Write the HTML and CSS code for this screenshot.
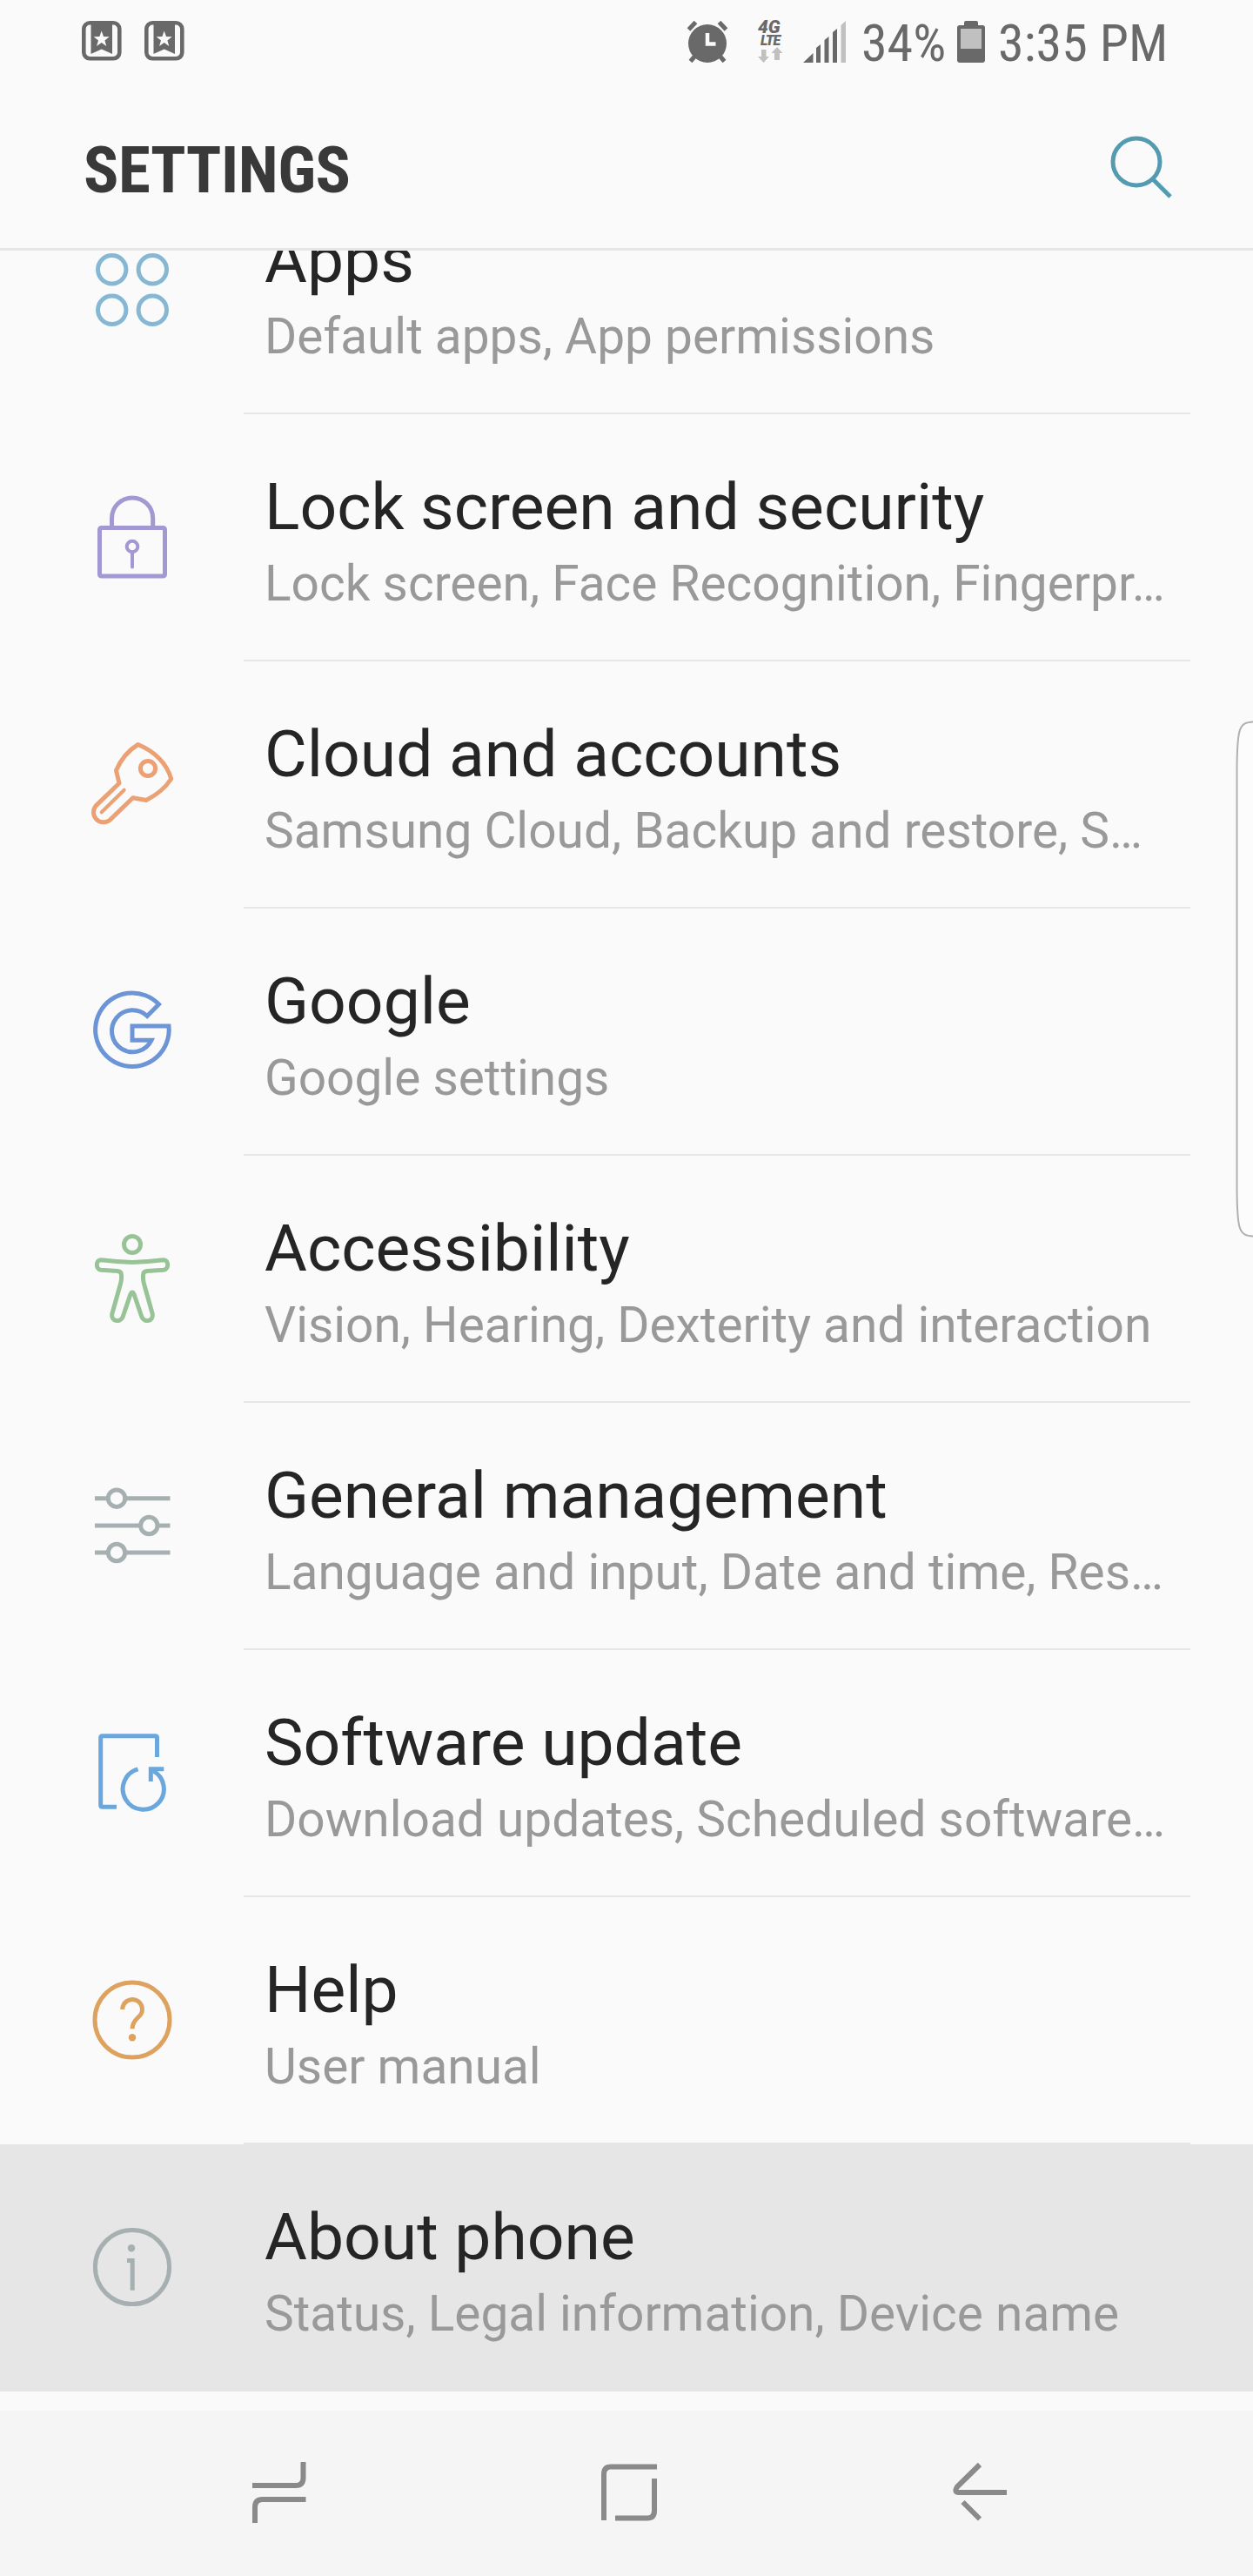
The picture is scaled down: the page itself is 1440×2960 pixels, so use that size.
FILE: index.html
```html
<!DOCTYPE html>
<html lang="en">
<head>
<meta charset="utf-8">
<title>Settings</title>
<link rel="stylesheet" href="styles.css">
</head>
<body>

<div class="phone">
  <!-- Status bar -->
  <div class="status-bar">
    <div class="notifications">
      <svg class="bookmark" width="46" height="46" viewBox="0 0 46 46">
        <rect class="frame" x="2.3" y="2.3" width="41" height="41" rx="7"/>
        <path d="M10.5 2h24.500v36l-12.250-5.500-12.250 5.500z"/>
        <path class="star" d="M22.700 11.500l2.300 6.600 6.700.1-5.300 4.200 1.900 6.500-5.600-3.900-5.600 3.900 1.900-6.500-5.300-4.200 6.700-.1z"/>
      </svg>
      <svg class="bookmark" width="46" height="46" viewBox="0 0 46 46">
        <rect class="frame" x="2.3" y="2.3" width="41" height="41" rx="7"/>
        <path d="M10.5 2h24.500v36l-12.250-5.500-12.250 5.500z"/>
        <path class="star" d="M22.700 11.500l2.300 6.600 6.700.1-5.300 4.200 1.900 6.500-5.600-3.900-5.600 3.900 1.900-6.500-5.300-4.200 6.700-.1z"/>
      </svg>
    </div>
    <div class="indicators">
      <svg class="alarm" width="48" height="48" viewBox="0 0 48 48">
        <circle cx="24" cy="26" r="22"/>
        <path class="bells" d="M2.500 10l8-8.500M45.500 10l-8-8.500M4.500 46.500l6-7M43.500 46.500l-6-7"/>
        <path class="hands" d="M24 14v12.500h9.500"/>
      </svg>
      <div class="network">
        <span class="net-4g">4G</span>
        <span class="net-lte">LTE</span>
        <svg width="30" height="18" viewBox="0 0 30 18">
          <path d="M4 3h5.500v8h3.500l-6.500 7-6.500-7h4zM19 15v-8h-3.500l6.500-7 6.500 7h-3.500v8z"/>
        </svg>
      </div>
      <svg class="signal" width="50" height="48" viewBox="0 0 50 48">
        <path d="M0 48l11.500-11v11zM15 48v-17l5-4v21zM24.500 48v-26l5-4v30zM34 48v-35l5-4v39z"/>
        <path class="off" d="M43.500 48v-43l5.500-5v48z"/>
      </svg>
      <span class="percent">34%</span>
      <svg class="battery" width="32" height="48" viewBox="0 0 32 48">
        <path d="M10 0h12q2 0 2 2v3h5q3 0 3 3v37q0 3-3 3h-26q-3 0-3-3v-37q0-3 3-3h5v-3q0-2 2-2z"/>
        <rect class="off" x="4" y="9" width="24" height="23"/>
      </svg>
      <span class="clock">3:35 PM</span>
    </div>
  </div>

  <!-- Title bar -->
  <div class="header">
    <h1>SETTINGS</h1>
    <svg class="search" width="72" height="72" viewBox="0 0 72 72">
      <circle cx="30" cy="30" r="27"/>
      <path d="M49 50l20 20"/>
    </svg>
  </div>

  <!-- Settings list -->
  <div class="list-window">
    <ul class="list">
      <li class="row">
        <svg class="icon apps" viewBox="0 0 96 96">
          <circle cx="24.700" cy="23.700" r="16.200"/>
          <circle cx="71.300" cy="23.700" r="16.200"/>
          <circle cx="24.700" cy="70.300" r="16.200"/>
          <circle cx="71.300" cy="70.300" r="16.200"/>
        </svg>
        <div class="text">
          <h2>Apps</h2>
          <p>Default apps, App permissions</p>
        </div>
      </li>
      <li class="row">
        <svg class="icon lock" viewBox="0 0 96 96">
          <rect x="10.500" y="36.500" width="75" height="55.500" rx="2"/>
          <path d="M24.500 36.500v-11a23.600 23.600 0 0 1 47.200 0v11"/>
          <circle class="thin" cx="48" cy="58" r="6.300"/>
          <path class="thin" d="M48 64.500v17"/>
        </svg>
        <div class="text">
          <h2>Lock screen and security</h2>
          <p>Lock screen, Face Recognition, Fingerpr…</p>
        </div>
      </li>
      <li class="row">
        <svg class="icon key" viewBox="0 0 96 96">
          <path d="M54.700 1.500Q38 11.500 29.500 31.300L33 46 6.200 71.900A11.500 11.500 0 0 0 22.400 88.100L48.700 62.800 64 65.500Q83 56 92.700 41 85 14.500 54.700 1.500z"/>
          <circle cx="66" cy="29" r="8.600"/>
          <path class="thin" d="M12.700 79.300l26-25.600"/>
        </svg>
        <div class="text">
          <h2>Cloud and accounts</h2>
          <p>Samsung Cloud, Backup and restore, S…</p>
        </div>
      </li>
      <li class="row">
        <svg class="icon google" viewBox="0 0 96 96">
          <path d="M78.500 16A42.300 42.300 0 1 0 90 41H48V57.300H70A24 24 0 1 1 65.200 29.500z"/>
        </svg>
        <div class="text">
          <h2>Google</h2>
          <p>Google settings</p>
        </div>
      </li>
      <li class="row">
        <svg class="icon accessibility" viewBox="0 0 96 96">
          <circle cx="48" cy="8" r="9.500"/>
          <path d="M48 28.500Q30 28 12 25.700C6 25.500 5.500 36.500 12 37.300L31 38.500Q35.500 39 35.500 43V48Q35 52 34 55L24.700 88C23.500 96.500 34 98 37 91.500L46 65Q48 61 50 65L59 91.500C62 98 72.500 96.500 71.300 88L62 55Q61 52 60.500 48V43Q60.500 39 65 38.500L84 37.300C90.500 36.500 90 25.500 84 25.700Q66 28 48 28.500z"/>
        </svg>
        <div class="text">
          <h2>Accessibility</h2>
          <p>Vision, Hearing, Dexterity and interaction</p>
        </div>
      </li>
      <li class="row">
        <svg class="icon general" viewBox="0 0 96 96">
          <circle cx="30" cy="15.700" r="9.700"/>
          <circle cx="67.300" cy="47" r="9.700"/>
          <circle cx="30" cy="78" r="9.700"/>
          <path d="M5 15.700h14M40.500 15.700h51M5 47h52M78 47h13.500M5 78h14M40.500 78h51"/>
        </svg>
        <div class="text">
          <h2>General management</h2>
          <p>Language and input, Date and time, Res…</p>
        </div>
      </li>
      <li class="row">
        <svg class="icon update" viewBox="0 0 96 96">
          <path d="M76.500 29v-22.300q0-2-2-2h-60.800q-2 0-2 2v77.600q0 2 2 2h16.300"/>
          <path d="M54.500 42.900A23.600 23.600 0 1 0 72 44.900"/>
          <path d="M84.300 42.700h-15v14.300"/>
        </svg>
        <div class="text">
          <h2>Software update</h2>
          <p>Download updates, Scheduled software…</p>
        </div>
      </li>
      <li class="row">
        <svg class="icon help" viewBox="0 0 96 96">
          <circle cx="48" cy="47" r="43"/>
          <path d="M36.800 35a11.300 11.300 0 1 1 20 7c-3 3.500-8.800 6.500-8.800 15.300"/>
          <circle class="dot" cx="48" cy="67.300" r="4.200"/>
        </svg>
        <div class="text">
          <h2>Help</h2>
          <p>User manual</p>
        </div>
      </li>
      <li class="row pressed">
        <svg class="icon info" viewBox="0 0 96 96">
          <circle cx="48" cy="47" r="42.600"/>
          <circle class="dot" cx="47" cy="25.300" r="4.200"/>
          <path d="M42 39.500h6.200v34.200"/>
        </svg>
        <div class="text">
          <h2>About phone</h2>
          <p>Status, Legal information, Device name</p>
        </div>
      </li>
    </ul>
  </div>

  <!-- Navigation bar -->
  <div class="nav-bar">
    <svg width="72" height="72" viewBox="0 0 72 72">
      <path d="M5 28h50q8.500 0 8.500-9v-18M8 71v-18q0-9 8.500-9h50"/>
    </svg>
    <svg width="72" height="72" viewBox="0 0 72 72">
      <path d="M7 68v-53q0-8.500 8-8.500h53M65 20v37q0 8.500-8 8.500h-37"/>
    </svg>
    <svg width="72" height="72" viewBox="0 0 72 72">
      <path d="M38 4l-26 25.500q-4 6.500 2 6.500h55M18.500 47l19.500 19.500"/>
    </svg>
  </div>

  <!-- Edge panel handle -->
  <svg class="edge-handle" width="20" height="594" viewBox="0 0 20 594">
    <path d="M21 1.500C4 2 1.500 7 1.500 60V534C1.500 587 4 592 21 592.500"/>
  </svg>
</div>

</body>
</html>
```
FILE: styles.css
```css
/* Reset some default styling */
* {
  margin: 0;
  padding: 0;
  box-sizing: border-box;
}

body {
  font-family: Roboto, sans-serif;
  background-color: #fafafa;
  color: #252525;
}

svg {
  display: block;
  flex-shrink: 0;
  overflow: visible;
}

.phone {
  position: relative;
  display: flex;
  flex-direction: column;
  width: 1440px;
  height: 2960px;
  overflow: hidden;
}

/* Status bar */
.status-bar {
  display: flex;
  justify-content: space-between;
  height: 96px;
  padding: 24px 98px 0 94px;
  color: #696969;
  fill: #696969;
}

.notifications,
.indicators {
  display: flex;
  align-items: flex-start;
}

.notifications {
  gap: 26px;
}

.bookmark .frame {
  fill: none;
  stroke: #696969;
  stroke-width: 4.6;
}

.bookmark .star {
  fill: #fafafa;
}

.alarm {
  margin-right: 34px;
}

.alarm .bells {
  stroke: #696969;
  stroke-width: 5;
}

.alarm .hands {
  fill: none;
  stroke: #fafafa;
  stroke-width: 4.5;
}

.network {
  display: flex;
  flex-direction: column;
  width: 30px;
  margin-right: 22px;
  font-weight: 900;
  font-style: italic;
}

.net-4g {
  font-size: 21px;
  line-height: 15px;
}

.net-lte {
  padding-left: 3px;
  font-size: 16px;
  line-height: 15px;
  letter-spacing: -1px;
}

.network svg,
.off {
  fill: #c0c0c0;
}

.percent,
.clock {
  font-family: "Roboto Condensed", Roboto, sans-serif;
  font-stretch: 75%;
  font-size: 60px;
  line-height: 60px;
  margin-top: -4px;
  white-space: nowrap;
}

.percent {
  width: 95px;
  margin: -4px 15px 0 17px;
}

.clock {
  width: 195px;
  margin-left: 15px;
}

/* Title bar */
.header {
  display: flex;
  justify-content: space-between;
  align-items: flex-start;
  height: 192px;
  padding: 55px 92px 0 96px;
  border-bottom: 3px solid #e6e6e6;
}

.header h1 {
  font-family: "Roboto Condensed", Roboto, sans-serif;
  font-stretch: 75%;
  font-size: 75px;
  line-height: 88px;
  font-weight: 700;
  letter-spacing: -0.5px;
  color: #393939;
}

.search {
  margin-top: 5px;
  fill: none;
  stroke: #549bb2;
  stroke-width: 5;
}

/* Settings list, scrolled a little under the title bar */
.list-window {
  height: 2482px;
  overflow: hidden;
}

.list {
  margin-top: -96px;
  list-style: none;
}

.row {
  display: flex;
  align-items: flex-start;
  height: 284px;
  padding: 0 72px 0 104px;
}

.row.pressed {
  background-color: #e6e6e6;
}

.icon {
  width: 96px;
  height: 96px;
  margin: 94px 80px 0 0;
  fill: none;
  stroke: currentColor;
  stroke-width: 5;
}

.icon .thin {
  stroke-width: 4;
  stroke-linecap: round;
}

.icon .dot {
  fill: currentColor;
  stroke: none;
}

.apps { color: #86b8d3; }
.lock { color: #a498d2; }
.key { color: #eba174; stroke-linejoin: round; }
.google { color: #6c95d8; }
.accessibility { color: #98c397; }
.general { color: #a6b0b0; }
.update { color: #6ba6dc; }
.help { color: #dda25e; }
.info { color: #a6b0b0; }

.text {
  flex: 1;
  height: 284px;
  padding: 62px 0 0 24px;
  border-bottom: 2px solid #e6e6e6;
  white-space: nowrap;
}

.text h2 {
  font-size: 75px;
  line-height: 88px;
  font-weight: 400;
}

.text p {
  margin-top: 11px;
  font-size: 56.8px;
  line-height: 68px;
  color: #999;
}

/* Navigation bar */
.nav-bar {
  display: flex;
  justify-content: space-between;
  flex: 1;
  padding: 58px 280px 0 285px;
  background-color: #f5f5f5;
}

.nav-bar svg {
  fill: none;
  stroke: #8a8a8a;
  stroke-width: 6;
}

/* Edge panel handle */
.edge-handle {
  position: absolute;
  top: 828px;
  right: 0;
  fill: #fcfcfc;
  stroke: #b0b0b0;
  stroke-width: 2;
}
```
